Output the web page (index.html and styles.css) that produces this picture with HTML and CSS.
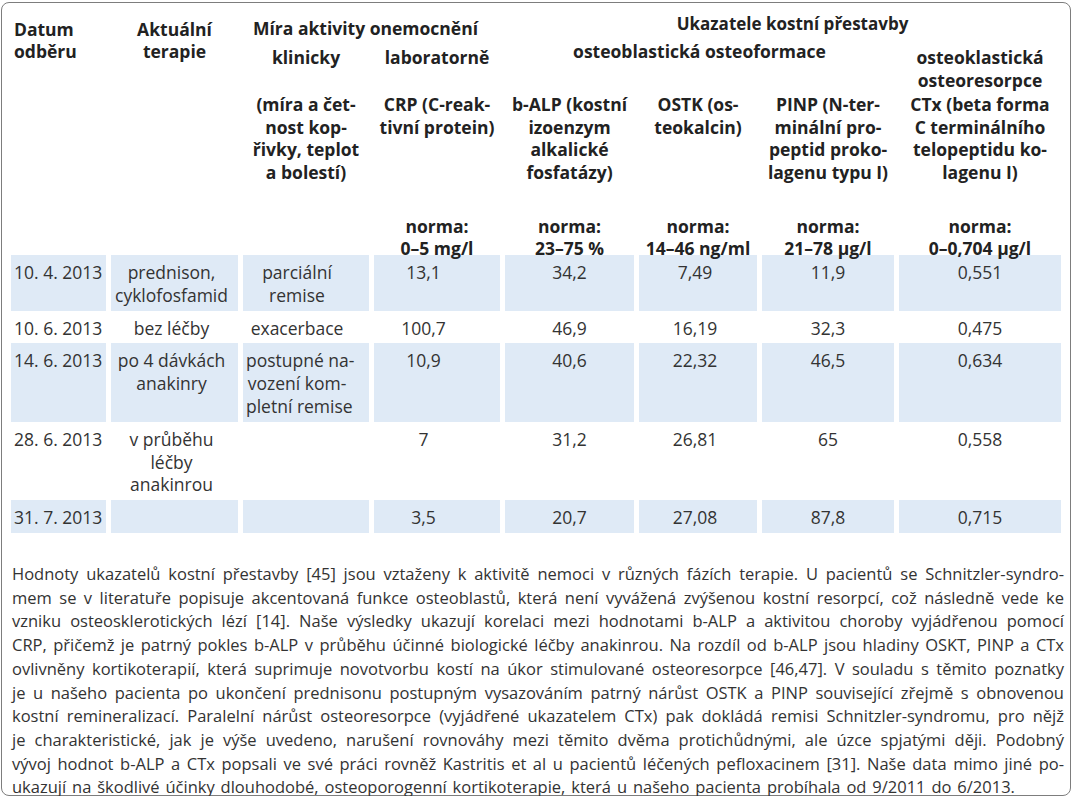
FILE: index.html
```html
<!DOCTYPE html>
<html lang="cs">
<head>
    <meta charset="UTF-8">
    <meta name="viewport" content="width=device-width, initial-scale=1.0">
    <title>Ukazatele kostní přestavby</title>
    <link rel="stylesheet" href="styles.css">
</head>
<body>
    <div class="sheet">
        <table class="markers">
            <colgroup>
                <col class="c-date">
                <col class="c-therapy">
                <col class="c-clinic">
                <col class="c-crp">
                <col class="c-alp">
                <col class="c-ostk">
                <col class="c-pinp">
                <col class="c-ctx">
            </colgroup>
            <thead>
                <tr>
                    <th rowspan="4" class="h-side h-date">Datum<br>odběru</th>
                    <th rowspan="4" class="h-side">Aktuální<br>terapie</th>
                    <th colspan="2" class="h-group h-activity">Míra aktivity onemocnění</th>
                    <th colspan="4" class="h-group h-bone">Ukazatele kostní přestavby</th>
                </tr>
                <tr class="h-sub">
                    <th>klinicky</th>
                    <th>laboratorně</th>
                    <th colspan="3" class="h-lift"><span>osteoblastická osteoformace</span></th>
                    <th>osteoklastická<br>osteoresorpce</th>
                </tr>
                <tr class="h-desc">
                    <th>(míra a čet-<br>nost kop-<br>řivky, teplot<br>a bolestí)</th>
                    <th>CRP (C-reak-<br>tivní protein)</th>
                    <th>b-ALP (kostní<br>izoenzym<br>alkalické<br>fosfatázy)</th>
                    <th>OSTK (os-<br>teokalcin)</th>
                    <th>PINP (N-ter-<br>minální pro-<br>peptid proko-<br>lagenu typu I)</th>
                    <th>CTx (beta forma<br>C terminálního<br>telopeptidu ko-<br>lagenu I)</th>
                </tr>
                <tr class="h-norm">
                    <th></th>
                    <th><span>norma:<br>0–5 mg/l</span></th>
                    <th><span>norma:<br>23–75 %</span></th>
                    <th><span>norma:<br>14–46 ng/ml</span></th>
                    <th><span>norma:<br>21–78 µg/l</span></th>
                    <th><span>norma:<br>0–0,704 µg/l</span></th>
                </tr>
            </thead>
            <tbody>
                <tr class="shaded">
                    <td class="date">10. 4. 2013</td>
                    <td>prednison,<br>cyklofosfamid</td>
                    <td>parciální<br>remise</td>
                    <td>13,1</td>
                    <td>34,2</td>
                    <td>7,49</td>
                    <td>11,9</td>
                    <td>0,551</td>
                </tr>
                <tr>
                    <td class="date">10. 6. 2013</td>
                    <td>bez léčby</td>
                    <td>exacerbace</td>
                    <td>100,7</td>
                    <td>46,9</td>
                    <td>16,19</td>
                    <td>32,3</td>
                    <td>0,475</td>
                </tr>
                <tr class="shaded">
                    <td class="date">14. 6. 2013</td>
                    <td>po 4 dávkách<br>anakinry</td>
                    <td>postupné na-<br>vození kom-<br>pletní remise</td>
                    <td>10,9</td>
                    <td>40,6</td>
                    <td>22,32</td>
                    <td>46,5</td>
                    <td>0,634</td>
                </tr>
                <tr>
                    <td class="date">28. 6. 2013</td>
                    <td>v průběhu<br>léčby<br>anakinrou</td>
                    <td></td>
                    <td>7</td>
                    <td>31,2</td>
                    <td>26,81</td>
                    <td>65</td>
                    <td>0,558</td>
                </tr>
                <tr class="shaded">
                    <td class="date">31. 7. 2013</td>
                    <td></td>
                    <td></td>
                    <td>3,5</td>
                    <td>20,7</td>
                    <td>27,08</td>
                    <td>87,8</td>
                    <td>0,715</td>
                </tr>
            </tbody>
        </table>

        <p class="note">
            <span class="ln">Hodnoty ukazatelů kostní přestavby [45] jsou vztaženy k aktivitě nemoci v různých fázích terapie. U pacientů se Schnitzler-syndro-</span>
            <span class="ln">mem se v literatuře popisuje akcentovaná funkce osteoblastů, která není vyvážená zvýšenou kostní resorpcí, což následně vede ke</span>
            <span class="ln">vzniku osteosklerotických lézí [14]. Naše výsledky ukazují korelaci mezi hodnotami b-ALP a aktivitou choroby vyjádřenou pomocí</span>
            <span class="ln">CRP, přičemž je patrný pokles b-ALP v průběhu účinné biologické léčby anakinrou. Na rozdíl od b-ALP jsou hladiny OSKT, PINP a CTx</span>
            <span class="ln">ovlivněny kortikoterapií, která suprimuje novotvorbu kostí na úkor stimulované osteoresorpce [46,47]. V souladu s těmito poznatky</span>
            <span class="ln">je u našeho pacienta po ukončení prednisonu postupným vysazováním patrný nárůst OSTK a PINP související zřejmě s obnovenou</span>
            <span class="ln">kostní remineralizací. Paralelní nárůst osteoresorpce (vyjádřené ukazatelem CTx) pak dokládá remisi Schnitzler-syndromu, pro nějž</span>
            <span class="ln">je charakteristické, jak je výše uvedeno, narušení rovnováhy mezi těmito dvěma protichůdnými, ale úzce spjatými ději. Podobný</span>
            <span class="ln">vývoj hodnot b-ALP a CTx popsali ve své práci rovněž Kastritis et al u pacientů léčených pefloxacinem [31]. Naše data mimo jiné po-</span>
            <span class="ln ln-last">ukazují na škodlivé účinky dlouhodobé, osteoporogenní kortikoterapie, která u našeho pacienta probíhala od 9/2011 do 6/2013.</span>
        </p>
    </div>
</body>
</html>
```

FILE: styles.css
```css
body {
    margin: 0;
    background: #fff;
    font-family: "Open Sans", "Noto Sans", sans-serif;
    color: #333;
}
.sheet {
    box-sizing: border-box;
    width: 1070px;
    height: 794px;
    margin: 2px 0 0 1px;
    padding: 8px 3px 0 4px;
    border: 1px solid #7d7d7d;
    border-radius: 8px;
}
.markers {
    width: 1060px;
    table-layout: fixed;
    border-collapse: separate;
    border-spacing: 5px 0;
    font-size: 17.5px;
}
.c-date { width: 95px; }
.c-therapy { width: 127px; }
.c-clinic { width: 126px; }
.c-crp { width: 126px; }
.c-alp { width: 129px; }
.c-ostk { width: 118px; }
.c-pinp { width: 132px; }
.c-ctx { width: 162px; }

th {
    font-weight: 700;
    color: #222;
    padding: 0;
    line-height: 23px;
    vertical-align: top;
    text-align: center;
    white-space: nowrap;
}
.h-side {
    line-height: 22px;
    padding-top: 7px;
}
.h-date {
    text-align: left;
    padding-left: 3px;
}
.h-group {
    padding: 5.9px 0 6px;
}
.h-activity {
    padding-right: 12px;
}
.h-bone {
    padding: 0.5px 0 0 19px;
    font-size: 17px;
}
.h-sub th {
    padding-bottom: 1px;
}
.h-lift span {
    display: block;
    margin-top: -5.5px;
}
.h-desc th {
    line-height: 22.7px;
}
.h-norm th {
    padding-top: 31px;
    line-height: 22px;
}
.h-norm span {
    display: block;
    margin-bottom: -3.7px;
}

td {
    padding: 6px 3px 4px;
    line-height: 22.8px;
    vertical-align: top;
    text-align: center;
    white-space: nowrap;
}
td.date {
    text-align: left;
}
/* values sit a little left of the column centre in the print */
tbody td:nth-child(2) { padding-right: 9px; }
tbody td:nth-child(3) { padding-right: 21px; }
tbody td:nth-child(4) { padding-right: 30px; }
tbody td:nth-child(6) { padding-right: 9px; }
.shaded td {
    background: #dfeaf6;
}

.note {
    margin: 29px 3px 0 6px;
    font-size: 16.5px;
    line-height: 23.7px;
    text-align: justify;
}
.ln {
    display: block;
    white-space: nowrap;
    text-align-last: justify;
}
.ln-last {
    text-align-last: left;
    word-spacing: 1.6px;
}
```
